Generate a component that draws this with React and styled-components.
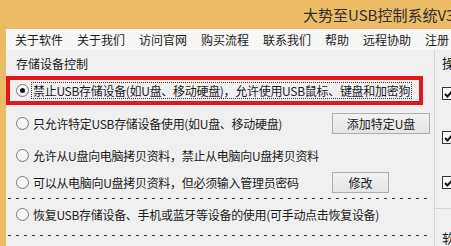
import React from "react";
import styled, { createGlobalStyle } from "styled-components";

const Global = createGlobalStyle`
  html, body { margin: 0; padding: 0; background: #ebbb66; }
  body { font-family: "Noto Sans CJK SC", "Noto Sans", sans-serif; color: #1b1b1b; }
  #root { width: 451px; height: 246px; overflow: hidden; }
`;

const Frame = styled.div`
  width: 451px;
  height: 246px;
  display: flex;
  flex-direction: column;
  overflow: hidden;
`;

const TitleBar = styled.div`
  height: 29px;
  flex: none;
  display: flex;
  align-items: center;
  padding-left: 303px;
  white-space: nowrap;
  font-size: 15px;
  color: #2e2e2e;
`;

const Window = styled.div`
  flex: 1;
  margin-left: 6px;
  background: #f0f0f0;
  display: flex;
  flex-direction: column;
  min-height: 0;
`;

const MenuBar = styled.div`
  height: 21px;
  flex: none;
  background: #f7f7f7;
  display: flex;
  align-items: center;
  padding-left: 2px;
  white-space: nowrap;
`;

const MenuItem = styled.span`
  font-size: 12px;
  line-height: 21px;
  padding: 0 7px;
  color: #1b1b1b;
`;

const Body = styled.div`
  flex: 1;
  display: flex;
  min-height: 0;
`;

const LeftPanel = styled.div`
  width: 428px;
  flex: none;
  display: flex;
  flex-direction: column;
`;

const GroupLabel = styled.div`
  margin-top: 7px;
  padding-left: 10px;
  font-size: 12px;
  line-height: 14px;
  height: 14px;
`;

const HighlightBox = styled.div`
  margin-top: 5px;
  width: 417px;
  height: 29px;
  box-sizing: border-box;
  border: 4px solid #e5151c;
  display: flex;
  align-items: center;
  padding-left: 6px;
  white-space: nowrap;
  overflow: hidden;
`;

const Row = styled.div`
  margin-top: ${(p) => p.$mt}px;
  height: 26px;
  display: flex;
  align-items: center;
  padding-left: 10px;
  padding-right: 4px;
  white-space: nowrap;
`;

const Radio = styled.span`
  width: 13px;
  height: 13px;
  flex: none;
  box-sizing: border-box;
  border-radius: 50%;
  border: 1px solid #7a7a7a;
  background: radial-gradient(circle at 40% 35%, #ffffff 0%, #f4f4f4 55%, #dedede 100%);
  display: flex;
  align-items: center;
  justify-content: center;
  &::after {
    content: "";
    width: 5px;
    height: 5px;
    border-radius: 50%;
    background: ${(p) => (p.$checked ? "#141414" : "transparent")};
  }
`;

const Label = styled.span`
  margin-left: 2px;
  font-size: 12px;
  line-height: 15px;
  letter-spacing: -0.3px;
  padding: 0 1px;
  border: 1px ${(p) => (p.$focused ? "dotted #333" : "solid transparent")};
`;

const Spacer = styled.span`
  flex: 1;
`;

const Button = styled.button`
  width: ${(p) => p.$w}px;
  height: 21px;
  box-sizing: border-box;
  border: 1px solid #adadad;
  background: linear-gradient(#f2f2f2, #e4e4e4);
  font-family: "Noto Sans CJK SC", "Noto Sans", sans-serif;
  font-size: 12px;
  color: #1b1b1b;
  padding: 0;
  margin-right: ${(p) => p.$mr}px;
`;

const Dashed = styled.div`
  margin-top: ${(p) => p.$mt}px;
  margin-left: 2px;
  width: 420px;
  height: 1px;
  flex: none;
  background: repeating-linear-gradient(90deg, #3a3a3a 0 3px, transparent 3px 8px);
`;

const RightPanel = styled.div`
  flex: 1;
  border-left: 1px solid #d6d6d6;
  display: flex;
  flex-direction: column;
  padding-top: 5px;
  overflow: hidden;
`;

const RightHead = styled.div`
  padding-left: 7px;
  font-size: 13px;
  line-height: 16px;
  height: 16px;
  margin-top: ${(p) => p.$mt || 0}px;
  white-space: nowrap;
`;

const Check = styled.span`
  margin-top: ${(p) => p.$mt}px;
  margin-left: 7px;
  width: 13px;
  height: 13px;
  box-sizing: border-box;
  border: 1px solid #333;
  background: #fff;
  display: flex;
  align-items: center;
  justify-content: center;
`;

const Rule = styled.div`
  margin-top: ${(p) => p.$mt}px;
  height: 1px;
  background: #d6d6d6;
`;

const CheckMark = () => (
  <svg width="9" height="8" viewBox="0 0 9 8">
    <path d="M1 4 L3.5 6.5 L8 1.5" fill="none" stroke="#111" strokeWidth="2" />
  </svg>
);

const menus = ["关于软件", "关于我们", "访问官网", "购买流程", "联系我们", "帮助", "远程协助", "注册"];

export default function App() {
  return (
    <Frame>
      <Global />
      <TitleBar>大势至USB控制系统V3</TitleBar>
      <Window>
        <MenuBar>
          {menus.map((m) => (
            <MenuItem key={m}>{m}</MenuItem>
          ))}
        </MenuBar>
        <Body>
          <LeftPanel>
            <GroupLabel>存储设备控制</GroupLabel>
            <HighlightBox>
              <Radio $checked />
              <Label $focused>禁止USB存储设备(如U盘、移动硬盘)，允许使用USB鼠标、键盘和加密狗</Label>
            </HighlightBox>
            <Row $mt={5}>
              <Radio />
              <Label>只允许特定USB存储设备使用(如U盘、移动硬盘)</Label>
              <Spacer />
              <Button $w={98} $mr={0}>添加特定U盘</Button>
            </Row>
            <Row $mt={6}>
              <Radio />
              <Label>允许从U盘向电脑拷贝资料，禁止从电脑向U盘拷贝资料</Label>
            </Row>
            <Row $mt={1}>
              <Radio />
              <Label>可以从电脑向U盘拷贝资料，但必须输入管理员密码</Label>
              <Spacer />
              <Button $w={57} $mr={41}>修改</Button>
            </Row>
            <Dashed $mt={3} />
            <Row $mt={2}>
              <Radio />
              <Label>恢复USB存储设备、手机或蓝牙等设备的使用(可手动点击恢复设备)</Label>
            </Row>
            <Dashed $mt={8} />
          </LeftPanel>
          <RightPanel>
            <RightHead>操</RightHead>
            <Check $mt={16}><CheckMark /></Check>
            <Check $mt={31}><CheckMark /></Check>
            <Check $mt={32}><CheckMark /></Check>
            <Rule $mt={19} />
            <RightHead $mt={21}>软</RightHead>
          </RightPanel>
        </Body>
      </Window>
    </Frame>
  );
}
